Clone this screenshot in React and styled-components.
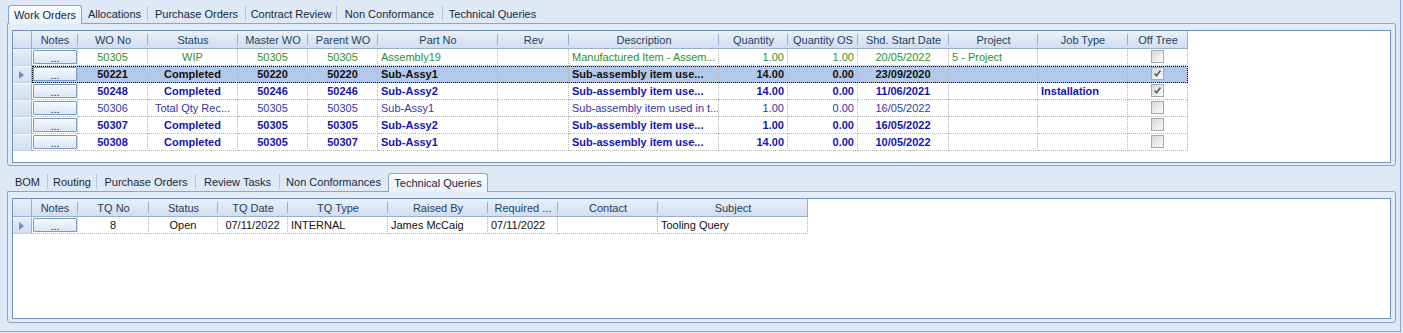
import React from "react";
import styled, { createGlobalStyle, css } from "styled-components";

const GlobalStyle = createGlobalStyle`
  html, body { margin: 0; padding: 0; background: #dfe9f5; }
  body { font-family: "Liberation Sans", Arial, sans-serif; font-size: 11px; }
`;

const Frame = styled.div`
  box-sizing: border-box;
  width: 1401px;
  height: 332px;
  padding: 5px 4px 8px 7px;
  background: #dfe9f5;
  border-right: 1px solid #8ea4c6;
  border-bottom: 1px solid #8ea4c6;
  display: flex;
  flex-direction: column;
`;

const Section = styled.div`
  display: flex;
  flex-direction: column;
  margin-top: ${(p) => p.$mt || 0}px;
  flex: ${(p) => (p.$grow ? "1 1 auto" : "0 0 auto")};
`;

const TabStrip = styled.div`
  display: flex;
  align-items: flex-end;
  height: 18px;
  padding-left: 1px;
`;

const Tab = styled.div`
  box-sizing: border-box;
  width: ${(p) => p.$w}px;
  display: flex;
  align-items: center;
  justify-content: center;
  color: #15283e;
  white-space: nowrap;
  ${(p) =>
    p.$active
      ? css`
          height: 19px;
          padding-bottom: 1px;
          margin-bottom: -1px;
          position: relative;
          z-index: 1;
          border: 1px solid #8ea4c6;
          border-bottom: none;
          border-radius: 3px 3px 0 0;
          background: linear-gradient(#fbfdff, #e9f0fa);
        `
      : css`
          height: 15px;
          margin-bottom: 2px;
          border-right: 1px solid ${p.$sep ? "#b3c4db" : "transparent"};
        `}
`;

const Panel = styled.div`
  box-sizing: border-box;
  height: ${(p) => (p.$h ? `${p.$h}px` : "auto")};
  flex: ${(p) => (p.$h ? "0 0 auto" : "1 1 auto")};
  border: 1px solid #8ea4c6;
  border-radius: 0 3px 3px 3px;
  background: #e2ecf8;
  padding: 6px 4px ${(p) => p.$pb}px 4px;
  display: flex;
`;

const GridBox = styled.div`
  box-sizing: border-box;
  flex: 1 1 auto;
  background: #fff;
  border: 1px solid #7090ba;
  overflow: hidden;
`;

const HeaderRow = styled.div`
  display: flex;
  height: 18px;
`;

const headBg = css`
  background: linear-gradient(#eaf0f8 0%, #dde7f4 50%, #d1def0 100%);
`;

const Corner = styled.div`
  box-sizing: border-box;
  width: 19px;
  ${headBg};
  border-right: 1px solid #97b0cd;
  border-bottom: 1px solid #97b0cd;
`;

const HeadCell = styled.div`
  position: relative;
  box-sizing: border-box;
  width: ${(p) => p.$w}px;
  height: 18px;
  line-height: 18px;
  text-align: center;
  color: #24405f;
  white-space: nowrap;
  overflow: hidden;
  ${headBg};
  border-bottom: 1px solid #97b0cd;
  &::after {
    content: "";
    position: absolute;
    right: 0;
    top: 3px;
    bottom: 3px;
    width: 1px;
    background: #97b0cd;
  }
  &:last-child::after {
    top: 0;
    bottom: 0;
  }
`;

const Row = styled.div`
  display: flex;
  height: 17px;
`;

const RowHead = styled.div`
  box-sizing: border-box;
  width: 19px;
  background: linear-gradient(#e4ecf7, #d2dfef);
  border-right: 1px solid #97b0cd;
  border-bottom: 1px solid #c2d2e7;
  border-top: 1px solid #f3f7fc;
  display: flex;
  align-items: center;
  padding-left: 6px;
`;

const Pointer = styled.div`
  width: 0;
  height: 0;
  border-top: 4px solid transparent;
  border-bottom: 4px solid transparent;
  border-left: 5px solid #6f8fbf;
`;

const Cells = styled.div`
  display: flex;
  ${(p) =>
    p.$selected &&
    css`
      background: #b3c9eb;
      outline: 1px dotted #000;
      outline-offset: -1px;
    `}
`;

const tones = {
  green: { color: "#2f8f2f", weight: 400 },
  black: { color: "#111", weight: 700 },
  blue: { color: "#1414b4", weight: 700 },
  plain: { color: "#3535aa", weight: 400 },
  normal: { color: "#111", weight: 400 },
};

const Cell = styled.div`
  box-sizing: border-box;
  width: ${(p) => p.$w}px;
  height: 17px;
  line-height: 17px;
  padding: 0 ${(p) => (p.$tight ? 1 : 3)}px;
  text-align: ${(p) => p.$align};
  color: ${(p) => tones[p.$tone].color};
  font-weight: ${(p) => tones[p.$tone].weight};
  border-right: 1px dotted #b5b5b5;
  border-bottom: 1px dotted #b5b5b5;
  white-space: nowrap;
  overflow: hidden;
`;

const NotesButton = styled.div`
  box-sizing: border-box;
  width: 44px;
  height: 14px;
  margin-top: 1px;
  border: 1px solid #7b9bc4;
  border-radius: 1px;
  background: linear-gradient(#f6f9fd, #dbe6f4);
  color: #222;
  font-weight: 400;
  text-align: center;
  line-height: 14px;
  font-size: 11px;
`;

const CheckBox = styled.div`
  box-sizing: border-box;
  width: 13px;
  height: 13px;
  margin: 1px auto 0;
  border: 1px solid #a8a8a8;
  background: linear-gradient(135deg, #d8d8d8, #fbfbfb);
  display: flex;
  align-items: center;
  justify-content: center;
`;

const Check = () => (
  <svg width="9" height="9" viewBox="0 0 9 9">
    <path d="M1.5 4.5 L3.5 6.8 L7.5 1.5" stroke="#4d5d78" strokeWidth="1.6" fill="none" />
  </svg>
);

const woColumns = [
  { title: "Notes", w: 46, align: "center", type: "notes" },
  { title: "WO No", w: 70, align: "center" },
  { title: "Status", w: 90, align: "center" },
  { title: "Master WO", w: 70, align: "center" },
  { title: "Parent WO", w: 70, align: "center" },
  { title: "Part No", w: 120, align: "left" },
  { title: "Rev", w: 71, align: "left" },
  { title: "Description", w: 150, align: "left" },
  { title: "Quantity", w: 69, align: "right" },
  { title: "Quantity OS", w: 70, align: "right" },
  { title: "Shd. Start Date", w: 91, align: "center" },
  { title: "Project", w: 89, align: "left" },
  { title: "Job Type", w: 90, align: "left" },
  { title: "Off Tree", w: 60, align: "center", type: "check" },
];

const woRows = [
  { tone: "green", cells: ["", "50305", "WIP", "50305", "50305", "Assembly19", "", "Manufactured Item - Assem...", "1.00", "1.00", "20/05/2022", "5 - Project", "", false] },
  { tone: "black", selected: true, cells: ["", "50221", "Completed", "50220", "50220", "Sub-Assy1", "", "Sub-assembly item use...", "14.00", "0.00", "23/09/2020", "", "", true] },
  { tone: "blue", cells: ["", "50248", "Completed", "50246", "50246", "Sub-Assy2", "", "Sub-assembly item use...", "14.00", "0.00", "11/06/2021", "", "Installation", true] },
  { tone: "plain", cells: ["", "50306", "Total Qty Rec...", "50305", "50305", "Sub-Assy1", "", "Sub-assembly item used in t...", "1.00", "0.00", "16/05/2022", "", "", false] },
  { tone: "blue", cells: ["", "50307", "Completed", "50305", "50305", "Sub-Assy2", "", "Sub-assembly item use...", "1.00", "0.00", "16/05/2022", "", "", false] },
  { tone: "blue", cells: ["", "50308", "Completed", "50305", "50307", "Sub-Assy1", "", "Sub-assembly item use...", "14.00", "0.00", "10/05/2022", "", "", false] },
];

const tqColumns = [
  { title: "Notes", w: 46, align: "center", type: "notes" },
  { title: "TQ No", w: 71, align: "center" },
  { title: "Status", w: 69, align: "center" },
  { title: "TQ Date", w: 70, align: "center" },
  { title: "TQ Type", w: 100, align: "left" },
  { title: "Raised By", w: 100, align: "left" },
  { title: "Required ...", w: 70, align: "left" },
  { title: "Contact", w: 100, align: "left" },
  { title: "Subject", w: 150, align: "left" },
];

const tqRows = [
  { tone: "normal", cells: ["", "8", "Open", "07/11/2022", "INTERNAL", "James McCaig", "07/11/2022", "", "Tooling Query"] },
];

const DataGrid = ({ columns, rows, selectedPointer }) => (
  <GridBox>
    <HeaderRow>
      <Corner />
      {columns.map((c) => (
        <HeadCell key={c.title} $w={c.w}>
          {c.title}
        </HeadCell>
      ))}
    </HeaderRow>
    {rows.map((r, i) => (
      <Row key={i}>
        <RowHead>{(r.selected || selectedPointer === i) && <Pointer />}</RowHead>
        <Cells $selected={r.selected}>
          {columns.map((c, j) => (
            <Cell key={j} $w={c.w} $align={c.align} $tone={r.tone} $tight={c.type === "notes"}>
              {c.type === "notes" ? (
                <NotesButton>...</NotesButton>
              ) : c.type === "check" ? (
                <CheckBox>{r.cells[j] && <Check />}</CheckBox>
              ) : (
                r.cells[j]
              )}
            </Cell>
          ))}
        </Cells>
      </Row>
    ))}
  </GridBox>
);

const topTabs = [
  { label: "Work Orders", w: 74, active: true },
  { label: "Allocations", w: 66, sep: true },
  { label: "Purchase Orders", w: 98, sep: true },
  { label: "Contract Review", w: 91, sep: true },
  { label: "Non Conformance", w: 106, sep: true },
  { label: "Technical Queries", w: 100 },
];

const bottomTabs = [
  { label: "BOM", w: 40, sep: true },
  { label: "Routing", w: 49, sep: true },
  { label: "Purchase Orders", w: 99, sep: true },
  { label: "Review Tasks", w: 84, sep: true },
  { label: "Non Conformances", w: 108 },
  { label: "Technical Queries", w: 100, active: true },
];

const Tabs = ({ items }) => (
  <TabStrip>
    {items.map((t) => (
      <Tab key={t.label} $w={t.w} $active={t.active} $sep={t.sep}>
        {t.label}
      </Tab>
    ))}
  </TabStrip>
);

export default function App() {
  return (
    <>
      <GlobalStyle />
      <Frame>
        <Section>
          <Tabs items={topTabs} />
          <Panel $h={143} $pb={2}>
            <DataGrid columns={woColumns} rows={woRows} />
          </Panel>
        </Section>
        <Section $mt={7} $grow>
          <Tabs items={bottomTabs} />
          <Panel $pb={3}>
            <DataGrid columns={tqColumns} rows={tqRows} selectedPointer={0} />
          </Panel>
        </Section>
      </Frame>
    </>
  );
}
